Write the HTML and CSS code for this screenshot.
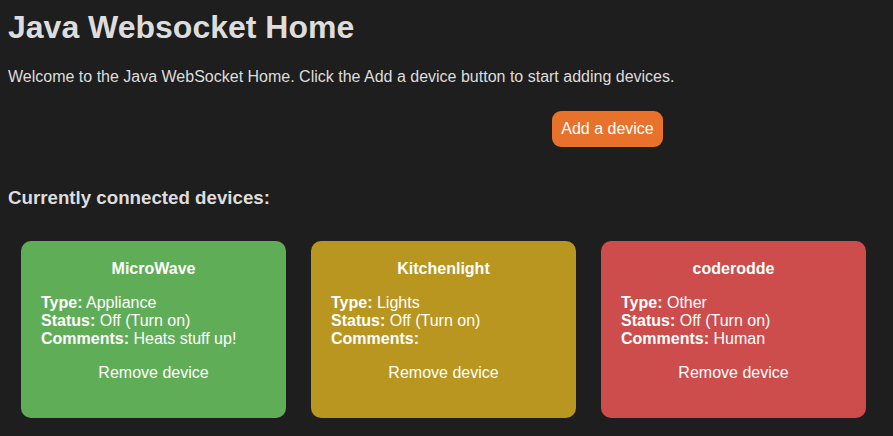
FILE: index.html
```html
<!DOCTYPE html>
<html>
<head>
<meta charset="utf-8">
<title>Java Websocket Home</title>
<link rel="stylesheet" href="styles.css">
</head>
<body>
<h1 class="title">Java Websocket Home</h1>
<p class="intro">Welcome to the Java WebSocket Home. Click the Add a device button to start adding devices.</p>
<div class="actions"><button class="add-btn">Add a device</button></div>
<h3 class="section-title">Currently connected devices:</h3>
<div class="devices">
  <div class="card card-green">
    <div class="card-name">MicroWave</div>
    <div class="card-info">
      <div><b>Type:</b> Appliance</div>
      <div><b>Status:</b> Off (Turn on)</div>
      <div><b>Comments:</b> Heats stuff up!</div>
    </div>
    <div class="card-remove">Remove device</div>
  </div>
  <div class="card card-gold">
    <div class="card-name">Kitchenlight</div>
    <div class="card-info">
      <div><b>Type:</b> Lights</div>
      <div><b>Status:</b> Off (Turn on)</div>
      <div><b>Comments:</b></div>
    </div>
    <div class="card-remove">Remove device</div>
  </div>
  <div class="card card-red">
    <div class="card-name">coderodde</div>
    <div class="card-info">
      <div><b>Type:</b> Other</div>
      <div><b>Status:</b> Off (Turn on)</div>
      <div><b>Comments:</b> Human</div>
    </div>
    <div class="card-remove">Remove device</div>
  </div>
</div>
</body>
</html>
```
FILE: styles.css
```css
html, body {
  background: #1e1e1e;
}
body {
  margin: 8px;
  font-family: "Liberation Sans", Arial, sans-serif;
  color: #dddddd;
  font-size: 16px;
}
.title {
  font-size: 32px;
  font-weight: bold;
  margin: 1px 0 0 0;
  line-height: 37px;
}
.intro {
  margin: 22px 0 0 0;
  line-height: 18px;
}
.actions {
  margin-top: 25px;
  padding-left: 544px;
}
.add-btn {
  background: #e8722b;
  color: #ffffff;
  border: none;
  border-radius: 9px;
  font-family: "Liberation Sans", Arial, sans-serif;
  font-size: 16px;
  width: 111px;
  height: 36px;
  padding: 0;
}
.section-title {
  font-size: 18.72px;
  font-weight: bold;
  margin: 40px 0 0 0;
  line-height: 22px;
}
.devices {
  display: flex;
  gap: 25px;
  margin-top: 32px;
  padding-left: 13px;
}
.card {
  width: 265px;
  height: 177px;
  box-sizing: border-box;
  border-radius: 10px;
  color: #ffffff;
  padding: 19px 20px 0 20px;
}
.card-green { background: #60ad58; }
.card-gold { background: #b8961f; }
.card-red { background: #cc4d4b; }
.card-name {
  text-align: center;
  font-weight: bold;
  line-height: 18px;
}
.card-info {
  margin-top: 16px;
  line-height: 18px;
}
.card-remove {
  text-align: center;
  margin-top: 16px;
  line-height: 18px;
}
```
